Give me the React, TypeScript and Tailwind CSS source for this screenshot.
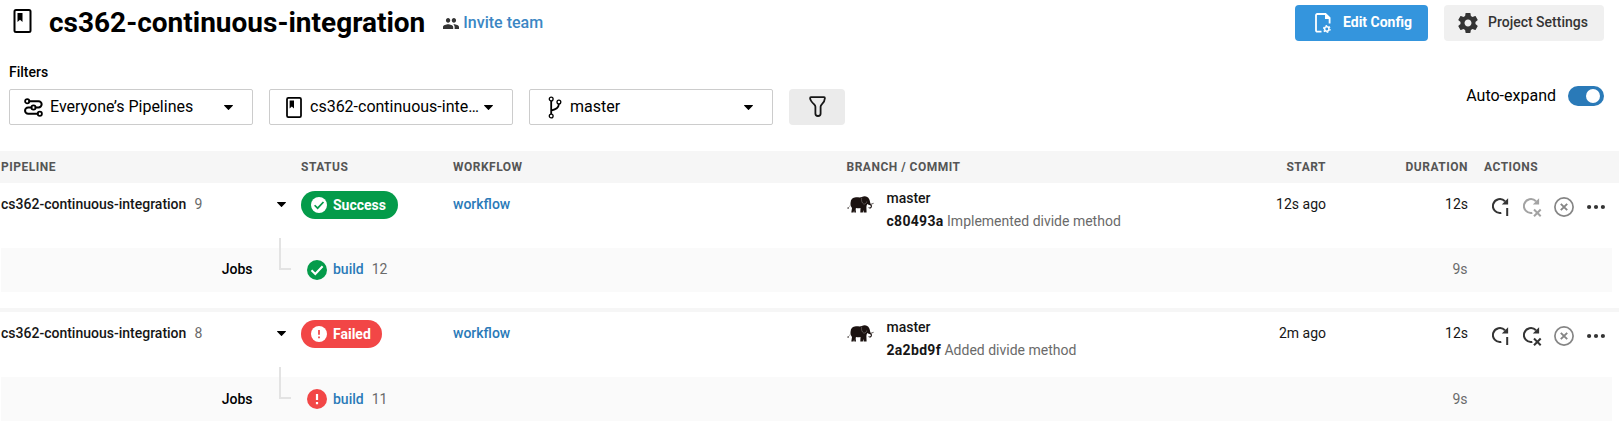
import React from "react";

type Status = "success" | "failed";

interface Pipeline {
  number: number;
  status: Status;
  commit: string;
  message: string;
  start: string;
  duration: string;
  job: { name: string; number: number; duration: string };
}

const pipelines: Pipeline[] = [
  {
    number: 9,
    status: "success",
    commit: "c80493a",
    message: "Implemented divide method",
    start: "12s ago",
    duration: "12s",
    job: { name: "build", number: 12, duration: "9s" },
  },
  {
    number: 8,
    status: "failed",
    commit: "2a2bd9f",
    message: "Added divide method",
    start: "2m ago",
    duration: "12s",
    job: { name: "build", number: 11, duration: "9s" },
  },
];

const columns = "grid grid-cols-[300px_152px_393.5px_379.5px_100px_142px_151px]";

function ProjectIcon({ className }: { className: string }) {
  return (
    <svg className={className} viewBox="0 0 18 24" fill="none">
      <rect x="1" y="1" width="16" height="22" rx="1.5" stroke="#000" strokeWidth="2" />
      <path d="M4 4h5v9l-2.5-2.2L4 13z" fill="#000" />
    </svg>
  );
}

function PeopleIcon() {
  return (
    <svg className="h-[11px] w-4" viewBox="1 5 22 14" preserveAspectRatio="none" fill="#343434">
      <path d="M16 11c1.66 0 2.99-1.34 2.99-3S17.66 5 16 5s-3 1.34-3 3 1.34 3 3 3zm-8 0c1.66 0 2.99-1.34 2.99-3S9.66 5 8 5 5 6.34 5 8s1.34 3 3 3zm0 2c-2.33 0-7 1.17-7 3.5V19h14v-2.5c0-2.33-4.67-3.5-7-3.5zm8 0c-.29 0-.62.02-.97.05 1.16.84 1.97 1.97 1.97 3.45V19h6v-2.5c0-2.33-4.67-3.5-7-3.5z" />
    </svg>
  );
}

function PipelinesIcon() {
  return (
    <svg className="h-[19px] w-[19px]" viewBox="0 0 19 19" fill="none" stroke="#000" strokeWidth="1.8">
      <circle cx="3.2" cy="3.2" r="2.1" />
      <circle cx="9.5" cy="9.5" r="2.1" />
      <circle cx="15.8" cy="15.8" r="2.1" />
      <path d="M5.3 3.2h9.2a3.1 3.1 0 0 1 0 6.3h-2.9M7.4 9.5H4.2a3.1 3.1 0 0 0 0 6.3h9.5" strokeWidth="2" strokeLinecap="round" />
    </svg>
  );
}

function BranchIcon() {
  return (
    <svg className="h-[23px] w-[14px]" viewBox="0 0 14 23" fill="none" stroke="#000">
      <circle cx="3.2" cy="3" r="1.9" strokeWidth="1.3" />
      <circle cx="3.2" cy="20" r="1.9" strokeWidth="1.3" />
      <circle cx="10.9" cy="6" r="1.9" strokeWidth="1.3" />
      <path d="M3.2 5v13M3.2 14.6c5-1.4 7.4-2.6 7.7-6.6" strokeWidth="1.8" />
    </svg>
  );
}

function FunnelIcon() {
  return (
    <svg className="-mt-px h-[21px] w-[17px]" viewBox="0 0 17 21" fill="none" stroke="#161616" strokeWidth="1.8" strokeLinejoin="round">
      <path d="M2 1.2h13a1 1 0 0 1 .9 1c-.1 2.4-1 4.2-3.1 6.2-.8.8-1.2 1.4-1.2 2.3v6.8c0 1.7-1.3 2.5-2.6 2.5s-2.6-.8-2.6-2.5v-6.8c0-.9-.4-1.5-1.2-2.3C3.1 6.4 1.2 4.6 1.1 2.2a1 1 0 0 1 .9-1z" />
    </svg>
  );
}

function FileGearIcon() {
  return (
    <svg className="h-5 w-4" viewBox="0 0 16 20" fill="none" stroke="#fff">
      <path d="M6.5 18.6H2.2A1.2 1.2 0 0 1 1 17.4V2.2A1.2 1.2 0 0 1 2.2 1h8.3L14.6 5v5.5" strokeWidth="1.8" />
      <path d="M10 1v5h5z" fill="#fff" stroke="none" />
      <circle cx="11.8" cy="16" r="2.2" strokeWidth="1.5" />
      <circle cx="11.8" cy="16" r="3.3" strokeWidth="1.2" strokeDasharray="1.73 1.726" />
    </svg>
  );
}

function GearIcon() {
  return (
    <svg className="h-5 w-5" viewBox="2 2 20 20" fill="#343434">
      <path d="M19.43 12.98c.04-.32.07-.64.07-.98s-.03-.66-.07-.98l2.11-1.65c.19-.15.24-.42.12-.64l-2-3.46c-.12-.22-.39-.3-.61-.22l-2.49 1c-.52-.4-1.08-.73-1.69-.98l-.38-2.65C14.46 2.18 14.25 2 14 2h-4c-.25 0-.46.18-.49.42l-.38 2.65c-.61.25-1.17.59-1.69.98l-2.49-1c-.23-.09-.49 0-.61.22l-2 3.46c-.13.22-.07.49.12.64l2.11 1.65c-.04.32-.07.65-.07.98s.03.66.07.98l-2.11 1.65c-.19.15-.24.42-.12.64l2 3.46c.12.22.39.3.61.22l2.49-1c.52.4 1.08.73 1.69.98l.38 2.65c.03.24.24.42.49.42h4c.25 0 .46-.18.49-.42l.38-2.65c.61-.25 1.17-.59 1.69-.98l2.49 1c.23.09.49 0 .61-.22l2-3.46c.12-.22.07-.49-.12-.64l-2.11-1.65zM12 15.5c-1.93 0-3.5-1.57-3.5-3.5s1.57-3.5 3.5-3.5 3.5 1.57 3.5 3.5-1.57 3.5-3.5 3.5z" />
    </svg>
  );
}

function Caret() {
  return (
    <svg className="h-[5px] w-[9px] shrink-0" viewBox="0 0 9 5">
      <path d="M.5 0h8a.4.4 0 0 1 .3.7L4.9 4.8a.5.5 0 0 1-.8 0L.2.7A.4.4 0 0 1 .5 0z" fill="#000" />
    </svg>
  );
}

function StatusIcon({ status, disc, mark, className }: { status: Status; disc: string; mark: string; className: string }) {
  return (
    <svg className={className} viewBox="0 0 20 20" fill="none">
      <circle cx="10" cy="10" r="10" fill={disc} />
      {status === "success" ? (
        <path d="M4.5 10.3 8.3 14 15.6 6.3" stroke={mark} strokeWidth="2.1" />
      ) : (
        <path d="M10 5v6M10 13v2.2" stroke={mark} strokeWidth="2.2" />
      )}
    </svg>
  );
}

function ElephantIcon() {
  return (
    <svg className="h-[17px] w-[27px]" viewBox="0 0 27 17">
      <path
        d="M4.3 16.5 5 11.9C4 10.5 3.4 9 3.5 7 3.7 3.5 5.5 1.5 9 1.3c2-.1 3.9.5 5.8-.2C16.5 0 18.6-.1 20.2.9c1.7 1 2.4 2.6 2.7 4.4.2 1.5.6 2.6 1.5 3.3.8.9.7 2.5-.2 3.4-.9.8-2.2.7-2.9-.2l.6-.6c.6.5 1.3.4 1.7-.1.4-.6.2-1.3-.4-1.8-1.2-.2-2.1-.7-2.9-1.3-.6 1-.9 1.9-.9 3.1l.2 5.4h-2.9l-.3-2.5-.6 2.5h-2.5l.2-4.5c-1.500.4-2.900.4-4.500.1-.5 1.200-.3 2.400.1 4.400H7.300l-.2-2.300-.5 2.300z"
        fill="#1b1210"
      />
      <path d="M3.7 8C3.3 10 2.3 11.3.9 11.9" fill="none" stroke="#8b8583" strokeWidth=".8" />
      <path d="M.3 11.5h1.5v1.3H.5z" fill="#4b4341" />
      <path d="M23.8 8.3l2.8-1" stroke="#544c49" strokeWidth=".9" />
      <path d="M14.7 1.7c-.7 2.7.1 5.3 2.2 6.5 1.5-.2 2.6-1.1 2.8-2.7" fill="none" stroke="#8d8784" strokeWidth=".5" />
    </svg>
  );
}

function RerunIcon({ kind, muted }: { kind: "all" | "failed"; muted: boolean }) {
  const color = muted ? "#a3a3a3" : "#343434";
  return (
    <svg className="h-5 w-[19px]" viewBox="0 0 19 20" fill="none" stroke={color}>
      <path d="M9.3 15.9A7 7 0 1 1 13 4.2" strokeWidth="2" />
      <path d="M16.1 1.2v6.3H9.8z" fill={color} stroke="none" />
      {kind === "all" ? (
        <path d="M15.2 11v8" strokeWidth="2" />
      ) : (
        <path d="M11 12.5l6.7 6.7M17.7 12.5 11 19.2" strokeWidth="2" />
      )}
    </svg>
  );
}

function CancelIcon() {
  return (
    <svg className="h-5 w-5" viewBox="0 0 20 20" fill="none" stroke="#858585">
      <circle cx="10" cy="10" r="9.1" strokeWidth="1.7" />
      <path d="M6.8 6.8l6.4 6.4M13.2 6.8l-6.4 6.4" strokeWidth="1.9" />
    </svg>
  );
}

function MoreIcon() {
  return (
    <svg className="h-5 w-[18px]" viewBox="0 0 18 20" fill="#343434">
      <circle cx="2.1" cy="10" r="2.1" />
      <circle cx="9" cy="10" r="2.1" />
      <circle cx="15.9" cy="10" r="2.1" />
    </svg>
  );
}

function Select({ icon, label, gap, pad }: { icon: React.ReactNode; label: string; gap: string; pad: string }) {
  return (
    <button className={`flex h-9 w-[244px] items-center rounded-xs border border-[#ccc] bg-white pr-[19px] text-base leading-5 ${pad}`}>
      {icon}
      <span className={`flex-1 text-left whitespace-nowrap ${gap}`}>{label}</span>
      <Caret />
    </button>
  );
}

function PipelineRow({ run }: { run: Pipeline }) {
  const ok = run.status === "success";
  const color = ok ? "#049b4a" : "#f24646";
  const lift = ok ? "-mt-0.5" : "";
  return (
    <section className="h-[125px]">
      <div className={`${columns} h-[65px] pl-px text-sm leading-5 text-[#161616]`}>
        <div className="mt-[11px] flex h-5 items-center pr-[15.5px]">
          <span className="font-medium">cs362-continuous-integration</span>
          <span className="ml-2 flex-1 text-[#6a6a6a]">{run.number}</span>
          <Caret />
        </div>
        <div className="pt-2">
          <span className={`inline-flex h-7 items-center gap-1.5 rounded-full pl-2.5 font-bold text-white ${ok ? "bg-[#049b4a] pr-3" : "bg-[#f24646] pr-[11px]"}`}>
            <StatusIcon status={run.status} disc="#fff" mark={color} className="h-4 w-4" />
            {ok ? "Success" : "Failed"}
          </span>
        </div>
        <div className="pt-[11px] font-medium text-[#2a7ab8]">workflow</div>
        <div className="flex">
          <div className="w-10 shrink-0 pt-[13px]">
            <ElephantIcon />
          </div>
          <div className="pt-[5px]">
            <div className="font-medium">master</div>
            <div className="mt-[3px] whitespace-nowrap text-[#6a6a6a]">
              <span className="font-bold tracking-[0.3px] text-[#161616]">{run.commit}</span> {run.message}
            </div>
          </div>
        </div>
        <div className="pt-[11px] text-right">{run.start}</div>
        <div className="pt-[11px] text-right">{run.duration}</div>
        <div className="flex items-start pt-3.5 pl-6">
          <RerunIcon kind="all" muted={false} />
          <div className="ml-3">
            <RerunIcon kind="failed" muted={ok} />
          </div>
          <div className="ml-3">
            <CancelIcon />
          </div>
          <div className="ml-[13px]">
            <MoreIcon />
          </div>
        </div>
      </div>
      <div className="relative ml-px flex h-11 w-[1611px] items-center bg-[#fafafa] text-sm leading-5">
        <span className={`w-[251.5px] text-right font-medium ${lift}`}>Jobs</span>
        <span className="absolute -top-2.5 left-[278px] h-8 w-3 border-b-2 border-l-2 border-[#e3e3e3]" />
        <span className="ml-[54.5px] flex items-center">
          <StatusIcon status={run.status} disc={color} mark="#fff" className="h-5 w-5" />
          <span className={`ml-1.5 font-medium text-[#2a7ab8] ${lift}`}>{run.job.name}</span>
          <span className={`ml-2 text-[#6a6a6a] ${lift}`}>{run.job.number}</span>
        </span>
        <span className={`ml-auto pr-[144.5px] text-[#6a6a6a] ${lift}`}>{run.job.duration}</span>
      </div>
    </section>
  );
}

export default function App() {
  return (
    <main className="h-[431px] w-[1619px] overflow-hidden bg-white font-[Roboto,'Liberation_Sans',sans-serif] text-black">
      <header className="flex h-[62px] items-start pt-[5px] pr-[15px] pl-[13px]">
        <ProjectIcon className="mt-1 h-6 w-[19px]" />
        <h1 className="ml-[17px] text-[28px] leading-9 font-bold">cs362-continuous-integration</h1>
        <a className="ml-[18px] flex h-9 items-center gap-1 text-base font-medium text-[#3b87c4]">
          <PeopleIcon />
          <span className="-mt-px">Invite team</span>
        </a>
        <div className="ml-auto flex gap-4 text-sm font-bold">
          <button className="flex h-9 w-[133px] items-center rounded bg-[#3495dd] pl-5 text-white">
            <FileGearIcon />
            <span className="-mt-0.5 ml-3">Edit Config</span>
          </button>
          <button className="flex h-9 w-40 items-center rounded bg-[#f0f0f0] pl-3.5 text-[#343434]">
            <GearIcon />
            <span className="-mt-0.5 ml-2.5 font-medium">Project Settings</span>
          </button>
        </div>
      </header>

      <div className="flex h-[89px] justify-between pr-[15px] pl-[9px]">
        <div>
          <div className="h-[27px] text-sm leading-5 font-medium">Filters</div>
          <div className="flex gap-4">
            <Select icon={<PipelinesIcon />} label="Everyone’s Pipelines" pad="pl-[14px]" gap="ml-[7px]" />
            <Select icon={<ProjectIcon className="h-[21px] w-4" />} label="cs362-continuous-inte…" pad="pl-4" gap="ml-2" />
            <Select icon={<BranchIcon />} label="master" pad="pl-[18px]" gap="ml-2" />
            <button className="flex h-9 w-14 items-center justify-center rounded bg-[#ebebeb]">
              <FunnelIcon />
            </button>
          </div>
        </div>
        <label className="mt-6 flex h-5 items-center gap-3 text-base leading-5">
          <span>Auto-expand</span>
          <span className="flex h-5 w-9 items-center justify-end rounded-full bg-[#2a7ab8] pr-1">
            <span className="h-3.5 w-3.5 rounded-full bg-white" />
          </span>
        </label>
      </div>

      <div className={`${columns} h-8 items-center bg-[#f6f6f6] pl-px text-xs font-bold tracking-[0.5px] text-[#555]`}>
        <span>PIPELINE</span>
        <span>STATUS</span>
        <span>WORKFLOW</span>
        <span>BRANCH / COMMIT</span>
        <span className="text-right">START</span>
        <span className="text-right">DURATION</span>
        <span className="pl-4">ACTIONS</span>
      </div>

      <PipelineRow run={pipelines[0]} />
      <div className="h-1 bg-[#f6f6f6]" />
      <PipelineRow run={pipelines[1]} />
    </main>
  );
}
